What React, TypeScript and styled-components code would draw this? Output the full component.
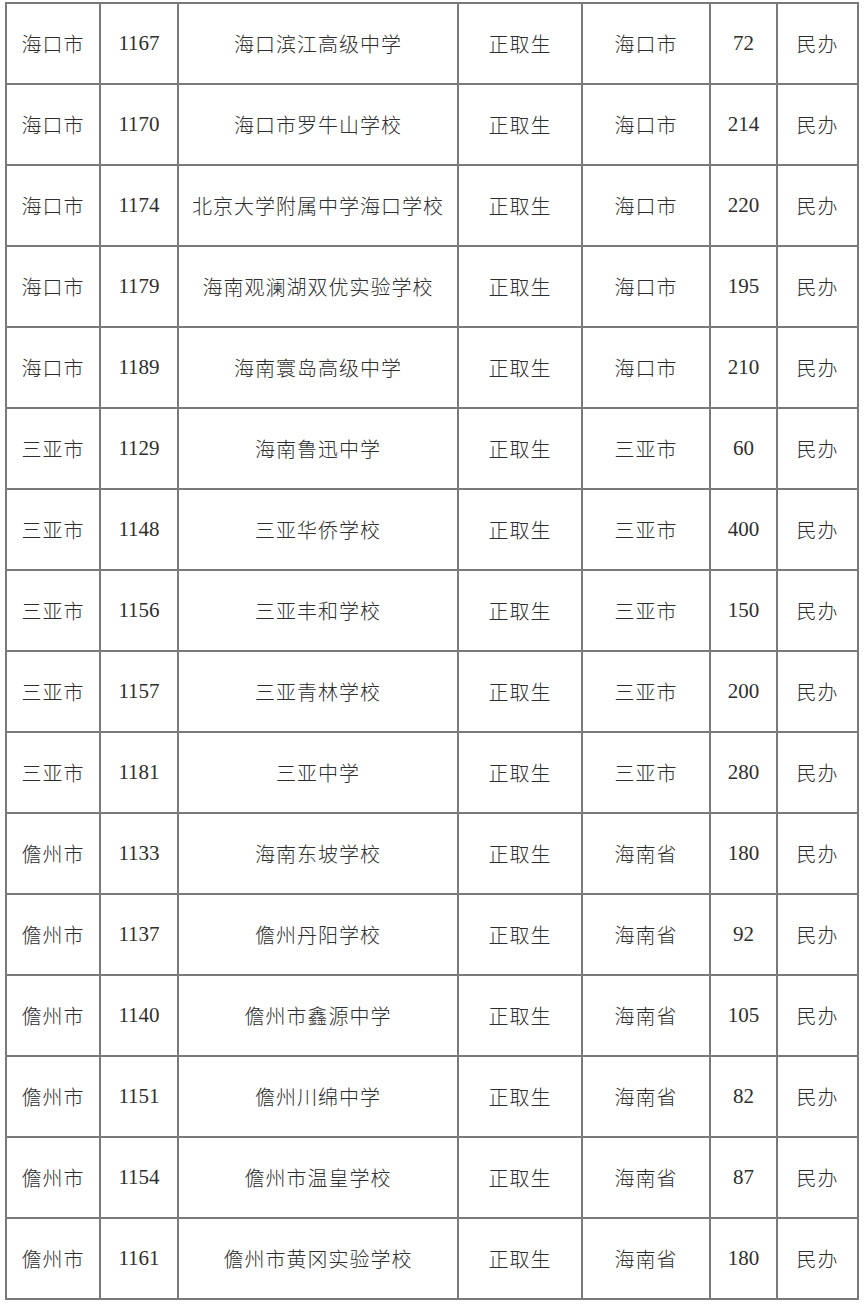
import React from "react";
import styled, { createGlobalStyle } from "styled-components";

const GlobalStyle = createGlobalStyle`
  html, body {
    margin: 0;
    padding: 0;
    background: #ffffff;
  }
`;

const COLUMNS = "92px 76px 278px 122px 126px 65px 79px";

const Page = styled.div`
  padding: 2px 0 0 5px;
`;

const Table = styled.div`
  display: grid;
  grid-template-columns: ${COLUMNS};
  grid-auto-rows: 79px;
  gap: 2px;
  padding: 2px;
  width: max-content;
  background: #7a7a7a;
`;

const Cell = styled.div<{ $latin?: boolean }>`
  display: flex;
  align-items: center;
  justify-content: center;
  background: #ffffff;
  color: #2e2e2e;
  font-family: "Liberation Serif", "Noto Sans CJK SC", serif;
  font-size: ${(p) => (p.$latin ? "21px" : "20px")};
  font-weight: 300;
  letter-spacing: ${(p) => (p.$latin ? "0" : "1px")};
  white-space: nowrap;
`;

type Row = [string, string, string, string, string, string, string];

const rows: Row[] = [
  ["海口市", "1167", "海口滨江高级中学", "正取生", "海口市", "72", "民办"],
  ["海口市", "1170", "海口市罗牛山学校", "正取生", "海口市", "214", "民办"],
  ["海口市", "1174", "北京大学附属中学海口学校", "正取生", "海口市", "220", "民办"],
  ["海口市", "1179", "海南观澜湖双优实验学校", "正取生", "海口市", "195", "民办"],
  ["海口市", "1189", "海南寰岛高级中学", "正取生", "海口市", "210", "民办"],
  ["三亚市", "1129", "海南鲁迅中学", "正取生", "三亚市", "60", "民办"],
  ["三亚市", "1148", "三亚华侨学校", "正取生", "三亚市", "400", "民办"],
  ["三亚市", "1156", "三亚丰和学校", "正取生", "三亚市", "150", "民办"],
  ["三亚市", "1157", "三亚青林学校", "正取生", "三亚市", "200", "民办"],
  ["三亚市", "1181", "三亚中学", "正取生", "三亚市", "280", "民办"],
  ["儋州市", "1133", "海南东坡学校", "正取生", "海南省", "180", "民办"],
  ["儋州市", "1137", "儋州丹阳学校", "正取生", "海南省", "92", "民办"],
  ["儋州市", "1140", "儋州市鑫源中学", "正取生", "海南省", "105", "民办"],
  ["儋州市", "1151", "儋州川绵中学", "正取生", "海南省", "82", "民办"],
  ["儋州市", "1154", "儋州市温皇学校", "正取生", "海南省", "87", "民办"],
  ["儋州市", "1161", "儋州市黄冈实验学校", "正取生", "海南省", "180", "民办"],
];

const isLatin = (s: string) => /^[0-9]+$/.test(s);

const App = () => {
  return (
    <Page>
      <GlobalStyle />
      <Table>
        {rows.map((row, r) =>
          row.map((text, c) => (
            <Cell key={`${r}-${c}`} $latin={isLatin(text)}>
              {text}
            </Cell>
          ))
        )}
      </Table>
    </Page>
  );
};

export default App;
